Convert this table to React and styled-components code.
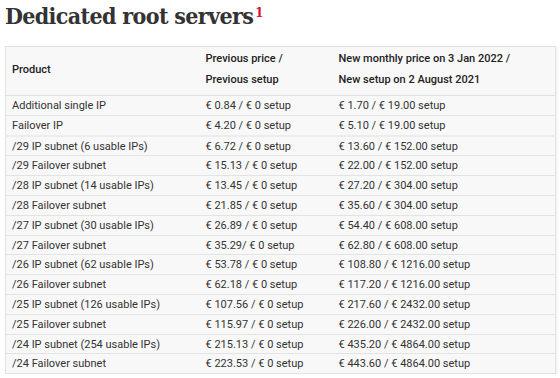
import styled, { createGlobalStyle } from 'styled-components'

const Global = createGlobalStyle`
  body {
    margin: 0;
    background: #fff;
    font-family: Roboto, "Liberation Sans", sans-serif;
    color: #333;
  }
`

const rows = [
  ['Additional single IP', '€ 0.84 / € 0 setup', '€ 1.70 / € 19.00 setup'],
  ['Failover IP', '€ 4.20 / € 0 setup', '€ 5.10 / € 19.00 setup', true],
  ['/29 IP subnet (6 usable IPs)', '€ 6.72 / € 0 setup', '€ 13.60 / € 152.00 setup'],
  ['/29 Failover subnet', '€ 15.13 / € 0 setup', '€ 22.00 / € 152.00 setup'],
  ['/28 IP subnet (14 usable IPs)', '€ 13.45 / € 0 setup', '€ 27.20 / € 304.00 setup'],
  ['/28 Failover subnet', '€ 21.85 / € 0 setup', '€ 35.60 / € 304.00 setup'],
  ['/27 IP subnet (30 usable IPs)', '€ 26.89 / € 0 setup', '€ 54.40 / € 608.00 setup'],
  ['/27 Failover subnet', '€ 35.29/ € 0 setup', '€ 62.80 / € 608.00 setup'],
  ['/26 IP subnet (62 usable IPs)', '€ 53.78 / € 0 setup', '€ 108.80 / € 1216.00 setup'],
  ['/26 Failover subnet', '€ 62.18 / € 0 setup', '€ 117.20 / € 1216.00 setup'],
  ['/25 IP subnet (126 usable IPs)', '€ 107.56 / € 0 setup', '€ 217.60 / € 2432.00 setup'],
  ['/25 Failover subnet', '€ 115.97 / € 0 setup', '€ 226.00 / € 2432.00 setup'],
  ['/24 IP subnet (254 usable IPs)', '€ 215.13 / € 0 setup', '€ 435.20 / € 4864.00 setup'],
  ['/24 Failover subnet', '€ 223.53 / € 0 setup', '€ 443.60 / € 4864.00 setup'],
]

export default function App() {
  return (
    <Page>
      <Global />
      <Title>
        Dedicated root servers<Note>1</Note>
      </Title>
      <Table>
        <colgroup>
          <col style={{ width: 194 }} />
          <col style={{ width: 133 }} />
          <col />
        </colgroup>
        <thead>
          <tr>
            <Head>Product</Head>
            <Head>
              Previous price /<br />
              Previous setup
            </Head>
            <Head>
              New monthly price on 3 Jan 2022 /<br />
              New setup on 2 August 2021
            </Head>
          </tr>
        </thead>
        <tbody>
          {rows.map(([product, previous, next, divider]) => (
            <Row key={product} $divider={divider}>
              <Cell>{product}</Cell>
              <Cell>{previous}</Cell>
              <Cell>{next}</Cell>
            </Row>
          ))}
        </tbody>
      </Table>
    </Page>
  )
}

const Page = styled.div`
  padding: 0 4px 0 5px;
`
const Title = styled.h2`
  margin: 0;
  padding-top: 1px;
  font-family: "DejaVu Serif Condensed", "DejaVu Serif", "Liberation Serif", serif;
  font-size: 23px;
  line-height: 30px;
  font-weight: bold;
  color: #333;
  letter-spacing: -0.65px;
`
const Note = styled.sup`
  color: #d50c2d;
  font-size: 13px;
  vertical-align: 7px;
  line-height: 0;
  margin-left: 2px;
`
const Table = styled.table`
  margin-top: 15px;
  width: 551px;
  border-collapse: collapse;
  table-layout: fixed;
  background: #f8f8f8;
  border: 1px solid #e3e3e3;
  box-shadow: 1px 1px 2px rgba(0, 0, 0, 0.08);
  font-size: 11px;
`
const Head = styled.th`
  text-align: left;
  font-weight: 500;
  line-height: 21px;
  padding: 1px 6px 5px;
  border-bottom: 1px solid #e0e0e0;
  color: #222;
`
const Row = styled.tr`
  border-bottom: ${p => (p.$divider ? '2px solid #ececec' : '1px solid #e3e3e3')};
  &:last-child {
    border-bottom: none;
  }
`
const Cell = styled.td`
  padding: 3px 6px 2px;
  line-height: 13.8px;
  color: #333;
  white-space: nowrap;
`
